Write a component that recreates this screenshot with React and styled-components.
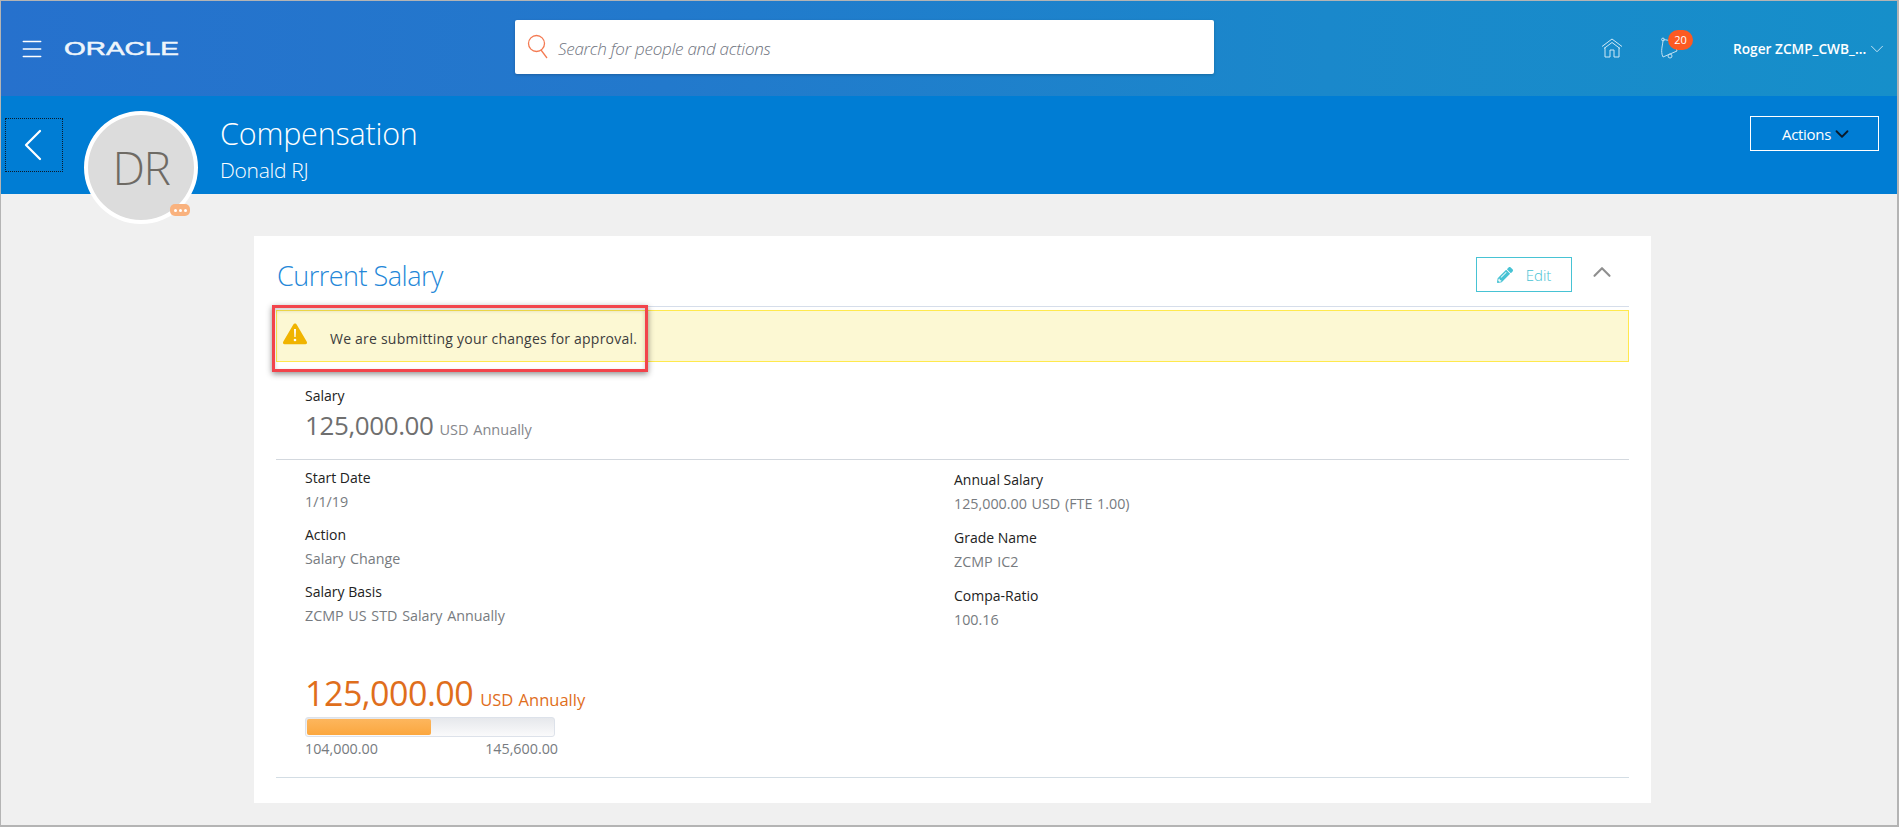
import React from 'react';
import styled, { createGlobalStyle } from 'styled-components';
import { ChevronDown, ChevronUp, ChevronLeft, Menu } from 'lucide-react';
import { FaPencilAlt } from 'react-icons/fa';

const GlobalStyle = createGlobalStyle`
  html, body {
    margin: 0;
    padding: 0;
    height: 100%;
    overflow: hidden;
    background: #f0f0f0;
    font-family: "Open Sans", "Noto Sans", sans-serif;
  }
`;

const Page = styled.div`
  width: 1899px;
  height: 827px;
  box-sizing: border-box;
  border: 1px solid #b4b4b4;
  border-right-width: 2px;
  border-bottom-width: 2px;
  background: #f0f0f0;
  position: relative;
  overflow: hidden;
`;

const TopBar = styled.header`
  height: 95px;
  background: linear-gradient(90deg, #2671cd 0%, #2279cc 35%, #1a88cb 70%, #168fca 100%);
  display: grid;
  grid-template-columns: 514px 699px 1fr;
  align-items: center;
  color: #fff;
`;

const Brand = styled.div`
  display: flex;
  align-items: center;
  padding: 0 0 0 18px;
  gap: 19px;
`;

const Logo = styled.span`
  font-family: "Liberation Sans", sans-serif;
  font-weight: 400;
  font-size: 19px;
  display: inline-block;
  transform: scaleX(1.47);
  transform-origin: left center;
  color: #eef5fb;
  -webkit-text-stroke: 0.5px #eef5fb;
`;

const SearchBox = styled.div`
  height: 54px;
  margin-bottom: 4px;
  background: #fff;
  border-radius: 2px;
  box-shadow: 0 1px 3px rgba(0, 0, 0, 0.2);
  display: flex;
  align-items: center;
  padding-left: 12px;
  gap: 10px;
`;

const SearchText = styled.span`
  font-size: 17px;
  font-style: italic;
  font-weight: 300;
  letter-spacing: -0.25px;
  color: #6f7480;
  margin-top: 3px;
`;

const TopActions = styled.div`
  display: flex;
  align-items: center;
  padding-left: 387px;
  height: 100%;
`;

const IconSlot = styled.div`
  position: relative;
  display: flex;
  width: ${(p) => p.$width}px;
  margin-top: -2px;
`;

const CountBadge = styled.span`
  position: absolute;
  left: 8px;
  top: -7px;
  width: 25px;
  height: 20px;
  border-radius: 10px;
  background: #fc5a22;
  color: #fff;
  font-size: 11px;
  line-height: 20px;
  text-align: center;
`;

const UserName = styled.span`
  font-size: 13.7px;
  font-weight: 600;
  white-space: nowrap;
  color: #fff;
`;

const SubHeader = styled.section`
  height: 98px;
  background: #007dd4;
  display: flex;
  color: #fff;
  position: relative;
`;

const BackButton = styled.button`
  width: 58px;
  height: 54px;
  margin: 22px 0 0 4px;
  padding: 0 3px 0 0;
  background: none;
  border: 1px dotted #0b1a2a;
  color: #fff;
  display: flex;
  align-items: center;
  justify-content: center;
  overflow: visible;

  svg {
    flex: none;
  }
`;

const Avatar = styled.div`
  width: 114px;
  height: 113px;
  box-sizing: border-box;
  margin: 15px 0 0 21px;
  flex: none;
  border: 4px solid #fff;
  border-radius: 50%;
  background: #dcdcdc;
  color: #6e6a64;
  font-size: 46px;
  font-weight: 300;
  letter-spacing: -1.5px;
  padding-bottom: 2px;
  display: flex;
  align-items: center;
  justify-content: center;
  position: relative;
  z-index: 1;
`;

const AvatarBadge = styled.span`
  position: absolute;
  right: 4px;
  bottom: 4px;
  width: 20px;
  height: 12px;
  border-radius: 5px;
  background: #f9b27e;
  display: flex;
  align-items: center;
  justify-content: center;
  gap: 2px;
`;

const BadgeDot = styled.i`
  width: 3px;
  height: 3px;
  border-radius: 50%;
  background: #fff;
`;

const TitleBlock = styled.div`
  margin: 17px 0 0 22px;
  flex: 1;
`;

const PageTitle = styled.h1`
  margin: 0;
  font-size: 30.5px;
  font-weight: 300;
  line-height: 40px;
  letter-spacing: -0.2px;
`;

const PersonName = styled.div`
  font-size: 21px;
  font-weight: 300;
  line-height: 28px;
  margin-top: 3px;
  letter-spacing: -0.3px;
`;

const ActionsButton = styled.button`
  width: 129px;
  height: 35px;
  margin: 20px 18px 0 0;
  background: none;
  border: 1px solid #fff;
  color: #fff;
  font-family: inherit;
  font-size: 15px;
  letter-spacing: -0.3px;
  display: flex;
  align-items: center;
  justify-content: center;
  gap: 0;
  padding: 0 0 0 6px;
`;

const Main = styled.main`
  padding: 42px 0 0 253px;
`;

const Card = styled.section`
  width: 1397px;
  height: 567px;
  box-sizing: border-box;
  background: #fff;
  padding: 0 22px;
`;

const CardHead = styled.div`
  height: 71px;
  display: flex;
  align-items: flex-start;
  justify-content: space-between;
  border-bottom: 1px solid #d6deea;
  box-sizing: border-box;
`;

const CardTitle = styled.h2`
  margin: 22px 0 0 1px;
  font-size: 27px;
  font-weight: 300;
  line-height: 36px;
  letter-spacing: -0.5px;
  color: #2487d8;
`;

const HeadActions = styled.div`
  display: flex;
  align-items: flex-start;
  margin-right: 12px;
  gap: 15px;
`;

const EditButton = styled.button`
  width: 96px;
  height: 35px;
  margin-top: 21px;
  background: #fff;
  border: 1px solid #47c3d4;
  color: #47c3d4;
  font-family: inherit;
  font-size: 15px;
  font-weight: 300;
  display: flex;
  align-items: center;
  justify-content: center;
  gap: 13px;
  padding: 0;
`;

const Collapse = styled.span`
  display: flex;
  margin-top: 21px;
  color: #8f8f8f;
`;

const Notice = styled.div`
  height: 52px;
  box-sizing: border-box;
  margin-top: 3px;
  background: #fcf8d3;
  border: 1px solid #ffe94d;
  display: flex;
  align-items: center;
  padding-left: 5px;
  gap: 22px;
  font-size: 14px;
  letter-spacing: 0.22px;
  color: #3d3d3d;

  svg {
    margin-top: -5px;
  }
`;

const NoticeText = styled.span`
  margin-top: 4px;
`;

const Annotation = styled.div`
  position: absolute;
  left: 271px;
  top: 304px;
  width: 376px;
  height: 67px;
  box-sizing: border-box;
  border: 3px solid #f2444b;
  box-shadow: 0 2px 6px rgba(0, 0, 0, 0.45), inset 0 2px 4px rgba(0, 0, 0, 0.2);
  pointer-events: none;
`;

const SalarySummary = styled.div`
  height: 98px;
  box-sizing: border-box;
  padding: 24px 0 0 29px;
  border-bottom: 1px solid #d3d8de;
`;

const Label = styled.div`
  font-size: 14px;
  line-height: 20px;
  letter-spacing: 0;
  color: #222;
`;

const Amount = styled.div`
  font-size: 26px;
  line-height: 36px;
  letter-spacing: -0.4px;
  color: #6f6f6f;
  margin-top: 1px;
`;

const Unit = styled.span`
  font-size: 14.5px;
  line-height: 1;
  letter-spacing: 0;
  word-spacing: 1px;
  margin-left: 6px;
  color: #85878c;
`;

const DetailGrid = styled.div`
  display: grid;
  grid-template-columns: 649px 1fr;
  padding: 8px 0 0 29px;
`;

const DetailColumn = styled.div`
  display: flex;
  flex-direction: column;
  gap: ${(p) => p.$gap}px;
  padding-top: ${(p) => p.$top}px;
`;

const Value = styled.div`
  font-size: 14.3px;
  line-height: 20px;
  word-spacing: 1px;
  color: #777b80;
  margin-top: 4px;
`;

const RangeBlock = styled.div`
  padding: 41px 0 0 29px;
`;

const CurrentAmount = styled.div`
  font-size: 34px;
  line-height: 44px;
  letter-spacing: -0.5px;
  color: #df6e1c;
`;

const CurrentUnit = styled.span`
  font-size: 16.5px;
  line-height: 1;
  letter-spacing: 0;
  word-spacing: 1px;
  margin-left: 7px;
`;

const Track = styled.div`
  width: 250px;
  height: 20px;
  box-sizing: border-box;
  margin-top: 2px;
  border: 1px solid #dde2ea;
  border-radius: 3px;
  background: linear-gradient(180deg, #e6e8ec, #fafafb);
  padding: 1px;
`;

const Fill = styled.div`
  height: 100%;
  border-radius: 2px;
  background: linear-gradient(180deg, #fdb65d, #fba73f);
`;

const RangeLabels = styled.div`
  width: 253px;
  display: flex;
  justify-content: space-between;
  margin-top: 2px;
  font-size: 14.3px;
  line-height: 20px;
  color: #777b80;
`;

const RangeRule = styled.div`
  height: 1px;
  background: #d3dde4;
  margin-top: 18px;
`;

const details = {
  left: [
    ['Start Date', '1/1/19'],
    ['Action', 'Salary Change'],
    ['Salary Basis', 'ZCMP US STD Salary Annually']
  ],
  right: [
    ['Annual Salary', '125,000.00 USD (FTE 1.00)'],
    ['Grade Name', 'ZCMP IC2'],
    ['Compa-Ratio', '100.16']
  ]
};

const SearchIcon = () => (
  <svg width="21" height="26" viewBox="0 0 21 26" fill="none" stroke="#f47a52" strokeWidth="1.3">
    <circle cx="9.5" cy="9.5" r="8" />
    <path d="M14 16l6 8" />
  </svg>
);

const HomeIcon = () => (
  <svg width="22" height="20" viewBox="0 0 22 20" fill="none" stroke="#cfe8f6" strokeWidth="1">
    <path d="M1 8.500L11 1l10 7.500" />
    <path d="M3 10.500L11 4.500l8 6" />
    <path d="M4 9.500V19h5v-7h4v7h5V9.500" />
  </svg>
);

const BellIcon = () => (
  <svg width="18" height="22" viewBox="0 0 18 22" fill="none" stroke="#bfe0f2" strokeWidth="1">
    <path d="M3 3c3-1 6 1 11 2l3 9-14 6C0 14 3 8 3 3z" />
    <circle cx="10" cy="19" r="2" />
    <circle cx="3" cy="2.500" r="1.400" />
  </svg>
);

const WarningIcon = () => (
  <svg width="26" height="23" viewBox="0 0 26 23">
    <path d="M13 1.500c.8 0 1.400.5 1.800 1.200l10 17c.6 1.200 0 2.500-1.400 2.500H2.600c-1.400 0-2-1.300-1.400-2.500l10-17c.4-.7 1-1.200 1.800-1.200z" fill="#f0b400" />
    <path d="M12 7h2l-.4 8h-1.200z" fill="#fff" />
    <circle cx="13" cy="18" r="1.300" fill="#fff" />
  </svg>
);

const DetailList = ({ items, gap, top }) => (
  <DetailColumn $gap={gap} $top={top}>
    {items.map(([label, value]) => (
      <div key={label}>
        <Label>{label}</Label>
        <Value>{value}</Value>
      </div>
    ))}
  </DetailColumn>
);

export default function App() {
  return (
    <>
      <GlobalStyle />
      <Page>
        <TopBar>
          <Brand>
            <Menu size={26} strokeWidth={1.4} color="#fff" />
            <Logo>ORACLE</Logo>
          </Brand>
          <SearchBox>
            <SearchIcon />
            <SearchText>Search for people and actions</SearchText>
          </SearchBox>
          <TopActions>
            <IconSlot $width={59}>
              <HomeIcon />
            </IconSlot>
            <IconSlot $width={73}>
              <BellIcon />
              <CountBadge>20</CountBadge>
            </IconSlot>
            <UserName>Roger ZCMP_CWB_...</UserName>
            <ChevronDown size={22} strokeWidth={1} color="#cfe8f6" />
          </TopActions>
        </TopBar>
        <SubHeader>
          <BackButton aria-label="Back">
            <ChevronLeft size={56} strokeWidth={0.95} />
          </BackButton>
          <Avatar>
            DR
            <AvatarBadge>
              <BadgeDot />
              <BadgeDot />
              <BadgeDot />
            </AvatarBadge>
          </Avatar>
          <TitleBlock>
            <PageTitle>Compensation</PageTitle>
            <PersonName>Donald RJ</PersonName>
          </TitleBlock>
          <ActionsButton>
            Actions
            <ChevronDown size={22} strokeWidth={2} color="#0a1a2a" />
          </ActionsButton>
        </SubHeader>
        <Main>
          <Card>
            <CardHead>
              <CardTitle>Current Salary</CardTitle>
              <HeadActions>
                <EditButton>
                  <FaPencilAlt size={16} />
                  Edit
                </EditButton>
                <Collapse>
                  <ChevronUp size={30} strokeWidth={1.7} />
                </Collapse>
              </HeadActions>
            </CardHead>
            <Notice>
              <WarningIcon />
              <NoticeText>We are submitting your changes for approval.</NoticeText>
            </Notice>
            <SalarySummary>
              <Label>Salary</Label>
              <Amount>
                125,000.00<Unit>USD Annually</Unit>
              </Amount>
            </SalarySummary>
            <DetailGrid>
              <DetailList items={details.left} gap={13} top={0} />
              <DetailList items={details.right} gap={14} top={2} />
            </DetailGrid>
            <RangeBlock>
              <CurrentAmount>
                125,000.00<CurrentUnit>USD Annually</CurrentUnit>
              </CurrentAmount>
              <Track>
                <Fill style={{ width: `${(125000 - 104000) / (145600 - 104000) * 100}%` }} />
              </Track>
              <RangeLabels>
                <span>104,000.00</span>
                <span>145,600.00</span>
              </RangeLabels>
            </RangeBlock>
            <RangeRule />
          </Card>
        </Main>
        <Annotation />
      </Page>
    </>
  );
}
